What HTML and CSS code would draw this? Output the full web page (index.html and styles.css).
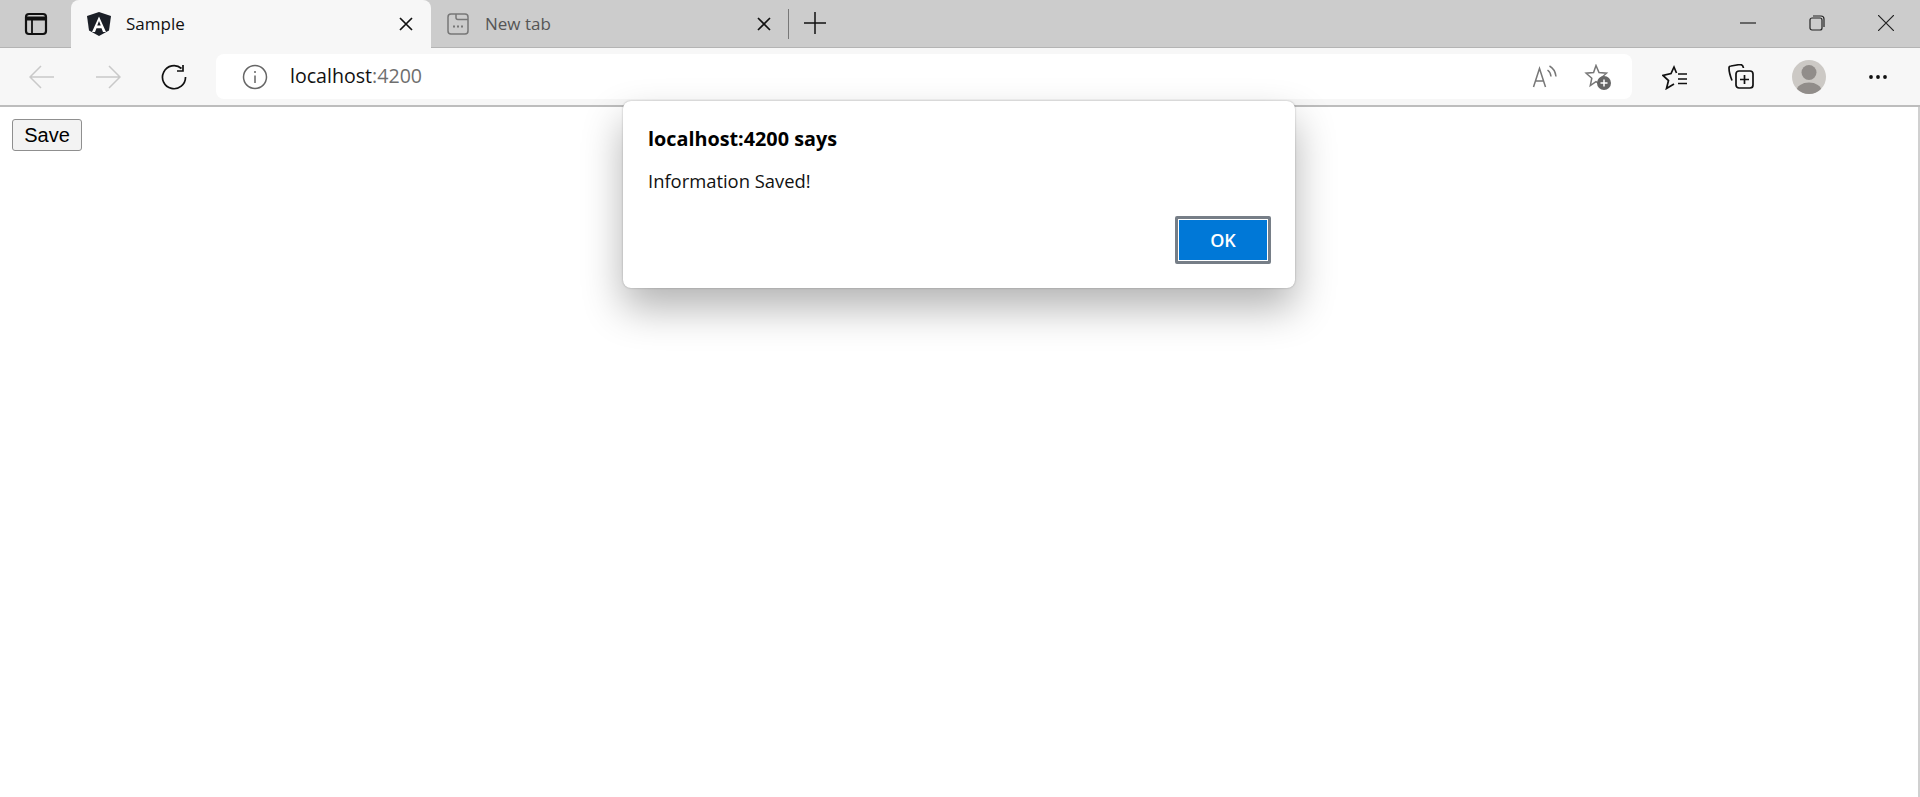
FILE: index.html
```html
<!DOCTYPE html>
<html lang="en">
<head>
    <meta charset="UTF-8">
    <title>Sample</title>
    <link rel="stylesheet" href="styles.css">
</head>
<body>
    <div class="tabstrip">
        <div class="tab-side">
            <svg width="24" height="24" viewBox="0 0 24 24" fill="none" stroke="#111" stroke-width="2.200"><rect x="2" y="2" width="20" height="20" rx="3"/><path d="M2 6.500h20" stroke-width="4"/><path d="M8 7v15" stroke-width="1.800"/></svg>
        </div>
        <div class="tab tab-active">
            <svg class="favicon" width="24" height="24" viewBox="0 0 24 24"><path d="M12 0 0 4l2 14.500L12 24l10-5.500L24 4z" fill="#1b1f27"/><path d="M12 4.500 5 20h3l1.500-3.700h5L16 20h3zm-1.800 9 1.800-4.500 1.800 4.500z" fill="#fff"/></svg>
            <span class="tab-title">Sample</span>
            <svg class="tab-close" width="14" height="14" viewBox="0 0 14 14" stroke="#111" stroke-width="1.700"><path d="M1 1l12 12M13 1 1 13"/></svg>
        </div>
        <div class="tab tab-idle">
            <svg class="favicon" width="24" height="24" viewBox="0 0 24 24" fill="none" stroke="#777" stroke-width="1.500"><rect x="2" y="2" width="20" height="20" rx="3"/><path d="M10 2v3.500q0 2 2 2h10"/><path d="M7 14.500h2M11 14.500h2M15 14.500h2" stroke-width="2"/></svg>
            <span class="tab-title">New tab</span>
            <svg class="tab-close" width="14" height="14" viewBox="0 0 14 14" stroke="#111" stroke-width="1.700"><path d="M1 1l12 12M13 1 1 13"/></svg>
        </div>
        <div class="tab-sep"></div>
        <svg class="new-tab" width="22" height="22" viewBox="0 0 22 22" stroke="#111" stroke-width="1.500"><path d="M11 0v22M0 11h22"/></svg>
        <div class="win-controls">
            <svg width="16" height="16" viewBox="0 0 16 16" stroke="#222" stroke-width="1.200"><path d="M0 8h16"/></svg>
            <svg width="16" height="16" viewBox="0 0 16 16" fill="none" stroke="#222" stroke-width="1.200"><rect x="1" y="3" width="12" height="12" rx="2"/><path d="M4 1h8q3 0 3 3v8"/></svg>
            <svg width="16" height="16" viewBox="0 0 16 16" stroke="#222" stroke-width="1.200"><path d="M0 0l16 16M16 0 0 16"/></svg>
        </div>
    </div>

    <div class="toolbar">
        <div class="nav-btn">
            <svg width="26" height="26" viewBox="0 0 26 26" fill="none" stroke="#c9c9c9" stroke-width="1.500"><path d="M25 13H1M12 2 1 13l11 11"/></svg>
        </div>
        <div class="nav-btn">
            <svg width="26" height="26" viewBox="0 0 26 26" fill="none" stroke="#c9c9c9" stroke-width="1.500"><path d="M1 13h24M14 2l11 11-11 11"/></svg>
        </div>
        <div class="nav-btn">
            <svg width="26" height="26" viewBox="0 0 26 26" fill="none" stroke="#111" stroke-width="1.700"><path d="M20.500 4.500A11.500 11.500 0 1 0 24.500 13"/><path d="M22 1v6h-6"/></svg>
        </div>
        <div class="address">
            <svg class="info" width="26" height="26" viewBox="0 0 26 26" fill="none" stroke="#666" stroke-width="1.500"><circle cx="13" cy="13" r="11.500"/><path d="M13 11.500V19M13 7v2"/></svg>
            <span class="url">localhost<span class="url-port">:4200</span></span>
            <svg class="read" width="26" height="26" viewBox="0 0 26 26" fill="none" stroke="#777" stroke-width="1.500"><path d="M1.500 23 7.500 4.500 13.500 23M3.500 17h8"/><path d="M15.500 6q3 2 3.500 6.500M17.500 2q5.500 3 6.500 10.500"/></svg>
            <svg class="star-add" width="27" height="26" viewBox="0 0 27 26"><path d="M12 1.500l3 7 7.500.7-5.700 5 1.700 7.300-6.500-3.900-5.700 3.900 1.500-7.300-5.700-5 7.500-.7z" fill="none" stroke="#777" stroke-width="1.500"/><circle cx="20" cy="19" r="7" fill="#666"/><path d="M20 15.500v7M16.500 19h7" stroke="#fff" stroke-width="1.500"/></svg>
        </div>
        <div class="actions">
            <svg class="act-fav" width="26" height="26" viewBox="0 0 26 26" fill="none" stroke="#111" stroke-width="1.700"><path d="M14.500 9 12 3 9 9.500 1 11.500l5.500 5-2 8L12 20"/><path d="M16 10h9M16 15h9M16 19.500h9" stroke-width="1.500"/></svg>
            <svg class="act-coll" width="26" height="26" viewBox="0 0 26 26" fill="none" stroke="#111" stroke-width="1.700"><path d="M4 16.500Q1 9 1 4q0-2 2-2l9-1.500q3 0 3.500 3.500"/><rect x="8" y="7" width="17" height="17" rx="3"/><path d="M16.500 11v9M12 15.500h9"/></svg>
            <svg class="act-avatar" width="34" height="34" viewBox="0 0 34 34"><defs><clipPath id="av"><circle cx="17" cy="17" r="17"/></clipPath></defs><circle cx="17" cy="17" r="17" fill="#ccc9c5"/><g clip-path="url(#av)" fill="#918d8a"><circle cx="17" cy="12.500" r="7.500"/><ellipse cx="17" cy="31" rx="12.500" ry="8.500"/></g></svg>
            <svg class="act-more" width="20" height="6" viewBox="0 0 20 6" fill="#111"><circle cx="3" cy="3" r="1.900"/><circle cx="10" cy="3" r="1.900"/><circle cx="17" cy="3" r="1.900"/></svg>
        </div>
    </div>

    <div class="page">
        <button class="save-btn">Save</button>
    </div>

    <div class="dialog">
        <div class="dialog-title">localhost:4200 says</div>
        <div class="dialog-msg">Information Saved!</div>
        <div class="dialog-foot">
            <button class="ok-btn">OK</button>
        </div>
    </div>
</body>
</html>
```

FILE: styles.css
```css
/* Browser chrome and the alert dialog */
html, body {
    height: 100%;
}
body {
    margin: 0;
    background-color: white;
    font-family: "Open Sans", "Noto Sans", sans-serif;
    color: #111;
    overflow: hidden;
    display: flex;
    flex-direction: column;
}
svg {
    display: block;
    flex: none;
}

/* Tab strip */
.tabstrip {
    height: 47px;
    flex: none;
    display: flex;
    align-items: center;
    background-color: #cccccc;
    border-bottom: 1px solid #b4b4b4;
}
.tab-side {
    width: 71px;
    display: flex;
    justify-content: center;
}
.tab {
    box-sizing: border-box;
    height: 48px;
    margin-bottom: -1px;
    display: flex;
    align-items: center;
    font-size: 17px;
}
.tab-active {
    width: 360px;
    padding: 0 18px 0 16px;
    background-color: #f7f7f7;
    border-radius: 8px 8px 0 0;
}
.tab-idle {
    width: 355px;
    padding: 0 15px 0 15px;
    color: #555;
}
.tab-title {
    flex: 1;
    margin-left: 15px;
    padding-bottom: 2px;
}
.tab-sep {
    width: 1px;
    height: 30px;
    background-color: #777;
    margin-left: 2px;
}
.new-tab {
    margin-left: 15px;
    margin-bottom: 2px;
}
.win-controls {
    margin-left: auto;
    display: flex;
    gap: 53px;
    padding-right: 26px;
    margin-bottom: 2px;
}

/* Toolbar */
.toolbar {
    height: 57px;
    flex: none;
    display: flex;
    align-items: center;
    background-color: #f7f7f7;
    border-bottom: 2px solid #bdbdbd;
    padding-left: 9px;
}
.nav-btn {
    width: 66px;
    display: flex;
    justify-content: center;
}
.address {
    box-sizing: border-box;
    width: 1416px;
    height: 45px;
    margin-left: 9px;
    display: flex;
    align-items: center;
    padding: 0 21px 0 26px;
    background-color: white;
    border-radius: 8px;
    font-size: 19.600px;
}
.url {
    flex: 1;
    margin-left: 22px;
    padding-bottom: 2px;
}
.url-port {
    color: #6f6f6f;
}
.read {
    margin-right: 26px;
}
.actions {
    display: flex;
    align-items: center;
    padding-left: 30px;
}
.act-coll {
    margin-left: 40px;
}
.act-avatar {
    margin-left: 38px;
}
.act-more {
    margin-left: 42px;
}

/* Page content */
.page {
    flex: 1;
    border-right: 2px solid #d0d0d0;
    padding: 12px;
}
.save-btn {
    display: block;
    box-sizing: border-box;
    width: 70px;
    height: 32px;
    padding: 0;
    font-family: "Liberation Sans", Arial, sans-serif;
    font-size: 20px;
    color: black;
    background-color: #f3f3f3;
    border: 1px solid #8f8f8f;
    border-radius: 3px;
}

/* Alert dialog sits over the page */
.dialog {
    position: absolute;
    top: 101px;
    left: 623px;
    box-sizing: border-box;
    width: 672px;
    height: 187px;
    padding: 24px 24px 24px 25px;
    background-color: white;
    border-radius: 8px;
    box-shadow: 0 0 2px rgba(0, 0, 0, 0.3), 0 20px 40px rgba(0, 0, 0, 0.3);
    display: flex;
    flex-direction: column;
}
.dialog-title {
    font-size: 19.800px;
    font-weight: 700;
    color: black;
    line-height: 27px;
}
.dialog-msg {
    margin-top: 17px;
    font-size: 18.400px;
    line-height: 24px;
}
.dialog-foot {
    margin-top: auto;
    display: flex;
    justify-content: flex-end;
}
.ok-btn {
    box-sizing: border-box;
    width: 96px;
    height: 48px;
    font-family: inherit;
    font-size: 18px;
    font-weight: 600;
    color: white;
    background-color: #0078d7;
    border: 3px solid #767e87;
    border-radius: 2px;
    box-shadow: inset 0 0 0 1px white;
}
```
